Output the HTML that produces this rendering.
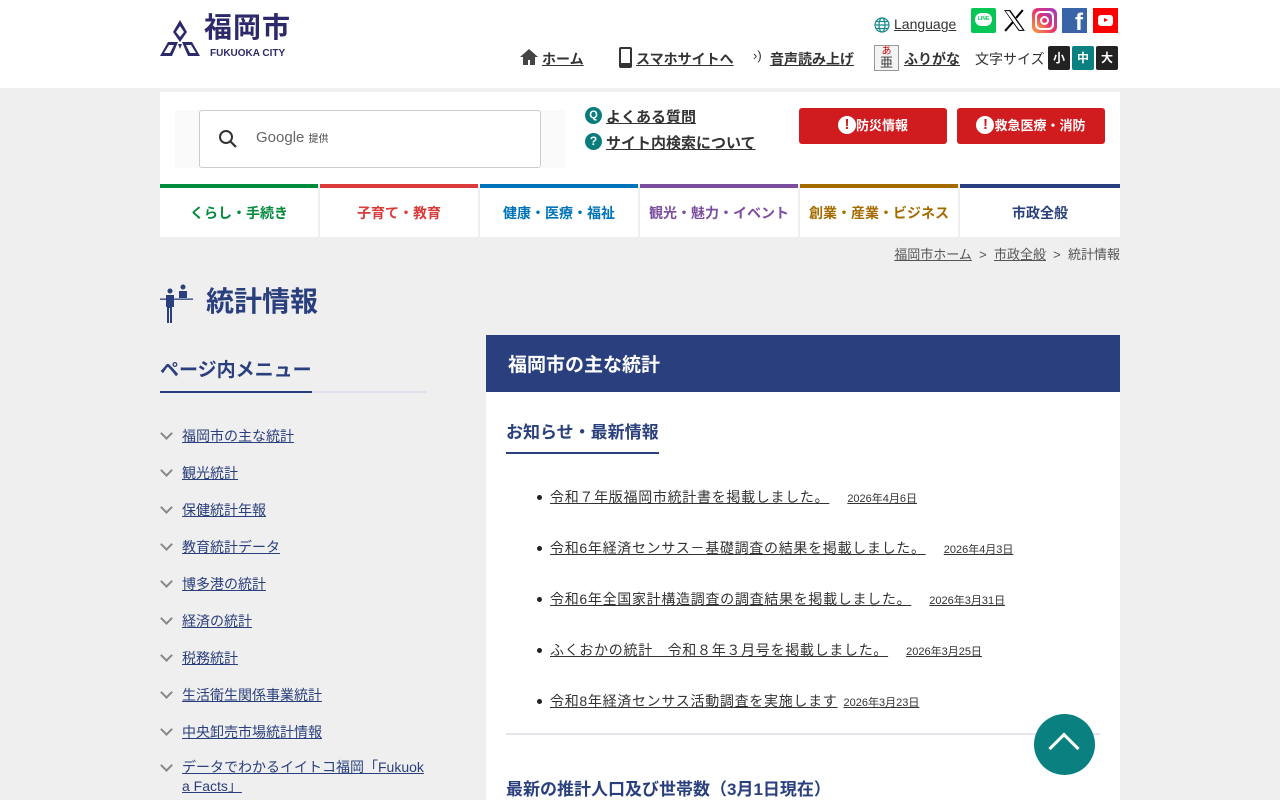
<!DOCTYPE html>
<html><head><meta charset="utf-8"><style>
*{margin:0;padding:0;box-sizing:border-box}
body{width:1280px;height:800px;overflow:hidden;background:#efefef;font-family:"Liberation Sans","Noto Sans CJK JP",sans-serif;color:#333;position:relative}
.abs{position:absolute}
a{color:#333;text-decoration:underline}
header{position:absolute;left:0;top:0;width:1280px;height:88px;background:#fff}
.tl{font-size:14px;font-weight:bold;color:#333;text-decoration:underline}
.nav{position:absolute;top:184px;height:53px;width:158px;background:#fff;text-align:center;font-size:14px;font-weight:bold;line-height:51px}
.menu li{list-style:none;position:absolute;left:160px;font-size:14px;color:#2a3f7d}
.menu li a{color:#2a3f7d}
.menu li::before{content:"";position:absolute;left:2px;top:3px;width:7px;height:7px;border-right:2px solid #888;border-bottom:2px solid #888;transform:rotate(45deg)}
.menu li a{margin-left:22px;display:block}
.news li{position:absolute;left:550px;font-size:14px;letter-spacing:0.7px;list-style:none}
.news li::before{content:"";position:absolute;left:-13px;top:8px;width:5px;height:5px;border-radius:50%;background:#222}
.news small{font-size:11px;margin-left:18px;letter-spacing:0}
</style></head><body>
<header>
<svg class="abs" style="left:160px;top:18px" width="40" height="40" viewBox="0 0 40 40"><g fill="#2c2a6b"><path d="M20 2 L27 14 L20 24 L13 14Z M20 8 L16 14 L20 19 L24 14Z" fill-rule="evenodd"/><path d="M0 38 L8 24 L18 24 L12 38Z M4 35 L9 27 L14 27 L10 35Z" fill-rule="evenodd"/><path d="M40 38 L32 24 L22 24 L28 38Z M36 35 L31 27 L26 27 L30 35Z" fill-rule="evenodd"/><path d="M18 26 L22 26 L20 31Z"/></g></svg>
<div class="abs" style="left:204px;top:11px;font-size:28px;line-height:34px;font-weight:bold;color:#2c2a6b;letter-spacing:1px">福岡市</div>
<div class="abs" style="left:210px;top:48px;font-size:10px;line-height:11px;font-weight:bold;color:#2c2a6b">FUKUOKA CITY</div>
<svg class="abs" style="left:874px;top:17px" width="16" height="16" viewBox="0 0 16 16"><g fill="none" stroke="#1a8a8a" stroke-width="1.2"><circle cx="8" cy="8" r="7"/><ellipse cx="8" cy="8" rx="3" ry="7"/><path d="M1 8h14M2 4.5h12M2 11.5h12"/></g></svg>
<a class="abs" style="left:894px;top:16px;font-size:14px;color:#333">Language</a>
<div class="abs" style="left:971px;top:8px;width:25px;height:25px;background:#06c755;border-radius:2px"><div style="margin:5px 4px;width:17px;height:13px;background:#fff;border-radius:7px;font-size:5px;color:#06c755;text-align:center;line-height:13px;font-weight:bold">LINE</div></div>
<svg class="abs" style="left:1002px;top:8px" width="25" height="25" viewBox="0 0 24 24"><path d="M2 2h6l14 20h-6Z M3.5 3h3.5l13 18h-3.5Z" fill="#000" fill-rule="evenodd"/><path d="M20 2L13.5 9.5M10.5 13.5L3 22" stroke="#000" stroke-width="2"/></svg>
<div class="abs" style="left:1032px;top:8px;width:25px;height:25px;border-radius:6px;background:linear-gradient(45deg,#f9a33a,#e8336b,#9b3bc6)"><div style="margin:3px;width:19px;height:19px;border-radius:5px;background:#fff;padding:2px"><div style="width:15px;height:15px;border-radius:4px;background:linear-gradient(45deg,#f9a33a,#e8336b,#9b3bc6);padding:3px"><div style="width:9px;height:9px;border-radius:50%;border:2px solid #fff"></div></div></div></div>
<div class="abs" style="left:1062px;top:8px;width:25px;height:25px;background:#3b64a8;color:#fff;font-size:24px;font-weight:bold;text-align:right;padding-right:4px;line-height:30px">f</div>
<div class="abs" style="left:1093px;top:8px;width:25px;height:25px;background:#f00"><div style="margin:7px 5px;width:15px;height:11px;background:#fff;border-radius:3px;position:relative"><div style="position:absolute;left:6px;top:3px;border-left:4px solid #f00;border-top:2.5px solid transparent;border-bottom:2.5px solid transparent"></div></div></div>
<svg class="abs" style="left:519px;top:48px" width="20" height="18" viewBox="0 0 20 18"><path d="M10 1L1 9h3v8h5v-5h2v5h5V9h3Z" fill="#444"/></svg>
<a class="abs tl" style="left:542px;top:49px">ホーム</a>
<div class="abs" style="left:619px;top:47px;width:13px;height:21px;border:2.5px solid #333;border-radius:2px;border-bottom-width:5px"></div>
<a class="abs tl" style="left:636px;top:49px">スマホサイトへ</a>
<div class="abs" style="left:753px;top:48px;font-size:13px;color:#333">›)</div>
<a class="abs tl" style="left:770px;top:49px">音声読み上げ</a>
<div class="abs" style="left:874px;top:45px;width:25px;height:26px;border:1px solid #999;background:#f4f4f4;text-align:center;font-size:10px;line-height:11px;color:#c00">あ<br><span style="color:#333;font-size:13px">亜</span></div>
<a class="abs tl" style="left:904px;top:49px">ふりがな</a>
<div class="abs" style="left:975px;top:49px;font-size:14px">文字サイズ</div>
<div class="abs" style="left:1048px;top:46px;width:22px;height:24px;background:#222;color:#fff;font-size:12px;font-weight:bold;text-align:center;line-height:24px;border-radius:2px">小</div>
<div class="abs" style="left:1072px;top:46px;width:22px;height:24px;background:#0a8080;color:#fff;font-size:12px;font-weight:bold;text-align:center;line-height:24px;border-radius:2px">中</div>
<div class="abs" style="left:1096px;top:46px;width:22px;height:24px;background:#222;color:#fff;font-size:12px;font-weight:bold;text-align:center;line-height:24px;border-radius:2px">大</div>
</header>
<div class="abs" style="left:160px;top:92px;width:960px;height:92px;background:#fff"></div>
<div class="abs" style="left:175px;top:110px;width:390px;height:58px;background:#fafafa"></div>
<div class="abs" style="left:199px;top:110px;width:342px;height:58px;background:#fff;border:1px solid #ccc;border-radius:3px"></div>
<svg class="abs" style="left:218px;top:129px" width="20" height="20" viewBox="0 0 20 20"><circle cx="8" cy="8" r="6" fill="none" stroke="#333" stroke-width="2"/><path d="M12.5 12.5L18 18" stroke="#333" stroke-width="2.2"/></svg>
<div class="abs" style="left:256px;top:129px;font-size:15px;color:#666">Google <span style="font-size:10px;color:#444">提供</span></div>
<div class="abs" style="left:585px;top:107px;width:17px;height:17px;border-radius:50%;background:#0a7c7c;color:#fff;font-size:11px;font-weight:bold;text-align:center;line-height:17px">Q</div>
<a class="abs tl" style="left:606px;top:106px;font-size:15px">よくある質問</a>
<div class="abs" style="left:585px;top:133px;width:17px;height:17px;border-radius:50%;background:#0a7c7c;color:#fff;font-size:12px;font-weight:bold;text-align:center;line-height:17px">?</div>
<a class="abs tl" style="left:606px;top:132px;font-size:15px">サイト内検索について</a>
<div class="abs" style="left:799px;top:108px;width:148px;height:36px;background:#d01c1f;border-radius:3px;color:#fff;font-size:13px;font-weight:bold;text-align:center;line-height:36px"><span style="display:inline-block;width:18px;height:18px;border-radius:50%;background:#fff;color:#d01c1f;line-height:18px;font-size:15px;vertical-align:1px">!</span>防災情報</div>
<div class="abs" style="left:957px;top:108px;width:148px;height:36px;background:#d01c1f;border-radius:3px;color:#fff;font-size:13px;font-weight:bold;text-align:center;line-height:36px"><span style="display:inline-block;width:18px;height:18px;border-radius:50%;background:#fff;color:#d01c1f;line-height:18px;font-size:15px;vertical-align:1px">!</span>救急医療・消防</div>
<div class="nav" style="left:160px;border-top:4px solid #008a3c;color:#008a3c">くらし・手続き</div>
<div class="nav" style="left:320px;border-top:4px solid #d93a3a;color:#d93a3a">子育て・教育</div>
<div class="nav" style="left:480px;border-top:4px solid #0074b8;color:#0074b8">健康・医療・福祉</div>
<div class="nav" style="left:640px;border-top:4px solid #7b4ea0;color:#7b4ea0">観光・魅力・イベント</div>
<div class="nav" style="left:800px;border-top:4px solid #a36b00;color:#a36b00">創業・産業・ビジネス</div>
<div class="nav" style="left:960px;width:160px;border-top:4px solid #2a3f7d;color:#2a3f7d">市政全般</div>
<div class="abs" style="right:160px;top:244px;font-size:13px;color:#555"><a style="color:#555">福岡市ホーム</a>&nbsp;&nbsp;&gt;&nbsp;&nbsp;<a style="color:#555">市政全般</a>&nbsp;&nbsp;&gt;&nbsp;&nbsp;統計情報</div>
<svg class="abs" style="left:160px;top:284px" width="36" height="40" viewBox="0 0 36 40"><g fill="#2a3f7d"><circle cx="10" cy="7" r="2.5"/><path d="M6 11h8v12h-2v16h-2V24h-1v15H7V23H6Z"/><circle cx="23" cy="3" r="2.5"/><path d="M19 7h8v7h-8Z"/><rect x="0" y="14.5" width="33" height="1.3"/></g></svg>
<div class="abs" style="left:206px;top:280px;font-size:28px;font-weight:bold;color:#2a3f7d">統計情報</div>
<div class="abs" style="left:160px;top:355px;font-size:19px;font-weight:bold;color:#2a3f7d">ページ内メニュー</div>
<div class="abs" style="left:160px;top:391px;width:266px;height:2px;background:#dde1ec"></div>
<div class="abs" style="left:160px;top:391px;width:152px;height:2px;background:#2a3f7d"></div>
<ul class="menu">
<li style="top:426px"><a>福岡市の主な統計</a></li>
<li style="top:463px"><a>観光統計</a></li>
<li style="top:500px"><a>保健統計年報</a></li>
<li style="top:537px"><a>教育統計データ</a></li>
<li style="top:574px"><a>博多港の統計</a></li>
<li style="top:611px"><a>経済の統計</a></li>
<li style="top:648px"><a>税務統計</a></li>
<li style="top:685px"><a>生活衛生関係事業統計</a></li>
<li style="top:722px"><a>中央卸売市場統計情報</a></li>
<li style="top:758px;width:270px;line-height:19px;word-break:break-all"><a>データでわかるイイトコ福岡「Fukuoka Facts」</a></li>
</ul>
<div class="abs" style="left:486px;top:335px;width:634px;height:465px;background:#fff"></div>
<div class="abs" style="left:486px;top:335px;width:634px;height:57px;background:#2a3f7d;color:#fff;font-size:19px;font-weight:bold;padding-left:22px;line-height:62px">福岡市の主な統計</div>
<div class="abs" style="left:506px;top:418px;font-size:17px;font-weight:bold;color:#2a3f7d">お知らせ・最新情報</div>
<div class="abs" style="left:506px;top:452px;width:153px;height:2px;background:#2a3f7d"></div>
<ul class="news">
<li style="top:487px"><a>令和７年版福岡市統計書を掲載しました。<small>2026年4月6日</small></a></li>
<li style="top:538px"><a>令和6年経済センサス－基礎調査の結果を掲載しました。<small>2026年4月3日</small></a></li>
<li style="top:589px"><a>令和6年全国家計構造調査の調査結果を掲載しました。<small>2026年3月31日</small></a></li>
<li style="top:640px"><a>ふくおかの統計　令和８年３月号を掲載しました。<small>2026年3月25日</small></a></li>
<li style="top:691px"><a>令和8年経済センサス活動調査を実施します<small style="margin-left:6px">2026年3月23日</small></a></li>
</ul>
<div class="abs" style="left:506px;top:733px;width:594px;height:2px;background:#e6e3ee"></div>
<div class="abs" style="left:506px;top:775px;font-size:17px;font-weight:bold;color:#2a3f7d">最新の推計人口及び世帯数（3月1日現在）</div>
<div class="abs" style="left:1034px;top:714px;width:61px;height:61px;border-radius:50%;background:#0a8080"></div>
<div class="abs" style="left:1053px;top:737px;width:22px;height:22px;border-left:3px solid #fff;border-top:3px solid #fff;transform:rotate(45deg)"></div>
</body></html>
